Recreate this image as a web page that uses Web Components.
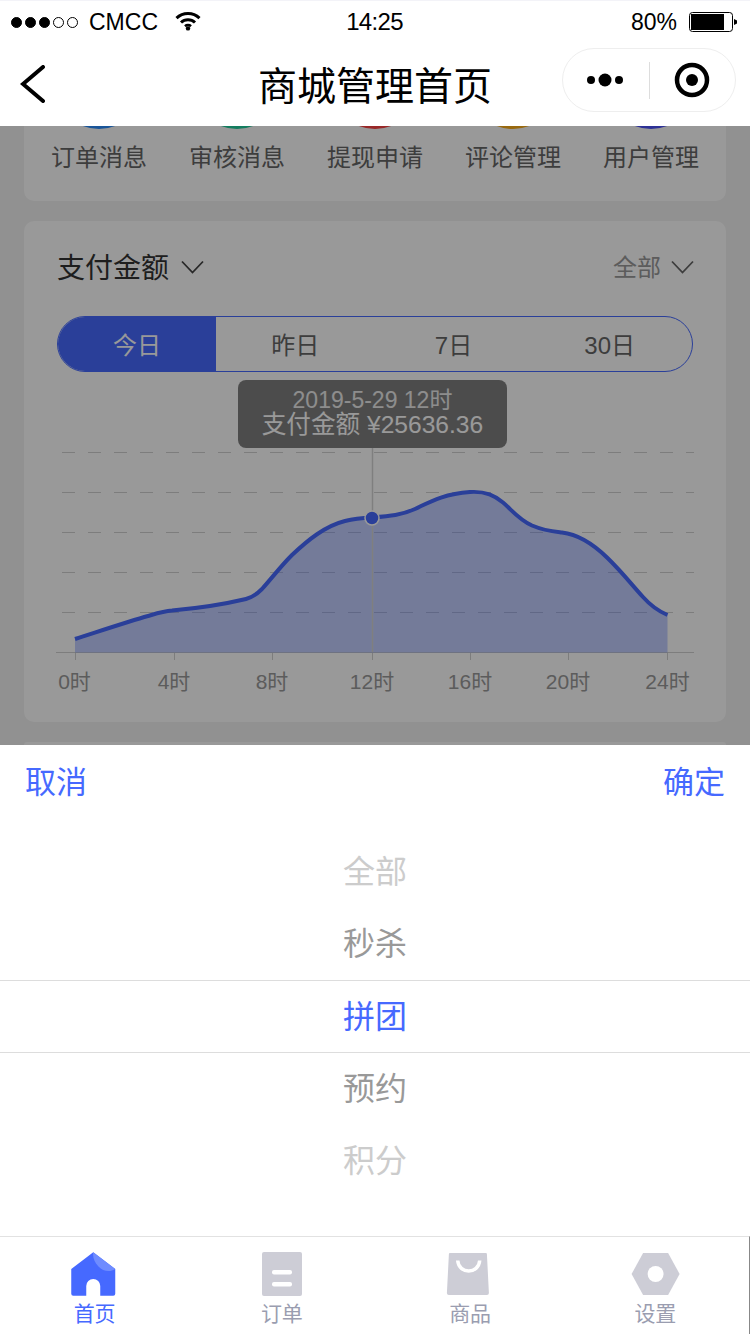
<!DOCTYPE html>
<html lang="zh">
<head>
<meta charset="utf-8">
<title>商城管理首页</title>
<style>
  html, body { margin: 0; padding: 0; }
  body {
    width: 750px;
    height: 1334px;
    overflow: hidden;
    background: #fff;
    font-family: "Liberation Sans", "Noto Sans CJK SC", sans-serif;
  }
  admin-page { height: 1334px; }
</style>
</head>
<body>
<admin-page>
  <status-bar slot="top"></status-bar>
  <nav-bar slot="top">商城管理首页</nav-bar>

  <shortcut-panel slot="behind">
    <shortcut-item color="#2a8eff">订单消息</shortcut-item>
    <shortcut-item color="#21d09e">审核消息</shortcut-item>
    <shortcut-item color="#ff4343">提现申请</shortcut-item>
    <shortcut-item color="#ffaf19">评论管理</shortcut-item>
    <shortcut-item color="#4b53fa">用户管理</shortcut-item>
  </shortcut-panel>
  <pay-card slot="behind"></pay-card>
  <next-card slot="behind"></next-card>

  <wheel-picker slot="bottom"></wheel-picker>
  <tab-bar slot="bottom"></tab-bar>
</admin-page>

<script>
class AdminPage extends HTMLElement {
  constructor() {
    super();
    this.attachShadow({ mode: "open" });
    this.shadowRoot.innerHTML = `
      <style>
        :host { display: flex; flex-direction: column; width: 750px; }
        .view {
          position: relative;
          flex: 1;
          min-height: 0;
          overflow: hidden;
          background: #f2f2f2;
          display: flex;
          flex-direction: column;
          justify-content: flex-end;
          align-items: center;
          gap: 20px;
        }
        .mask { position: absolute; inset: 0; background: rgba(0, 0, 0, 0.4); }
      </style>
      <slot name="top"></slot>
      <div class="view">
        <slot name="behind"></slot>
        <div class="mask"></div>
      </div>
      <slot name="bottom"></slot>
    `;
  }
}

class StatusBar extends HTMLElement {
  constructor() {
    super();
    this.attachShadow({ mode: "open" });
    this.shadowRoot.innerHTML = `
      <style>
        :host {
          display: grid;
          grid-template-columns: 1fr auto 1fr;
          align-items: center;
          height: 40px;
          padding: 3px 12px 0 11px;
          box-sizing: border-box;
          background: #fff;
          border-top: 1px solid #f3f3f8;
          color: #000;
          font-size: 23px;
        }
        .left { display: flex; align-items: center; }
        .dots { display: flex; gap: 3px; margin-right: 11px; }
        .dots i { width: 11px; height: 11px; border-radius: 50%; border: 1px solid #000; box-sizing: border-box; }
        .dots i.on { background: #000; }
        .wifi { margin-left: 17px; margin-top: -2px; }
        .right { display: flex; align-items: center; justify-content: flex-end; gap: 12px; }
        .time { font-size: 24px; letter-spacing: -0.7px; }
        svg { display: block; }
      </style>
      <div class="left">
        <div class="dots"><i class="on"></i><i class="on"></i><i class="on"></i><i></i><i></i></div>
        <span>CMCC</span>
        <svg class="wifi" width="26" height="20" viewBox="0 0 26 20">
          <path d="M1.500 7.200a16.500 16.500 0 0 1 23 0" fill="none" stroke="#000" stroke-width="3"/>
          <path d="M6 11.500a10 10 0 0 1 14 0" fill="none" stroke="#000" stroke-width="3"/>
          <path d="M10 15.200a4.500 4.500 0 0 1 6 0" fill="none" stroke="#000" stroke-width="2.600"/>
          <circle cx="13" cy="17.400" r="2.200"/>
        </svg>
      </div>
      <span class="time">14:25</span>
      <div class="right">
        <span>80%</span>
        <svg width="49" height="20" viewBox="0 0 49 20">
          <rect x="0.500" y="0.500" width="43" height="19" rx="3" fill="none" stroke="#000"/>
          <rect x="2" y="2" width="33" height="16" fill="#000"/>
          <path d="M45 7l3 1.500v3l-3 1.500z" fill="#000"/>
        </svg>
      </div>
    `;
  }
}

class NavBar extends HTMLElement {
  constructor() {
    super();
    this.attachShadow({ mode: "open" });
    this.shadowRoot.innerHTML = `
      <style>
        :host {
          display: grid;
          grid-template-columns: 1fr auto 1fr;
          align-items: center;
          height: 86px;
          background: #fff;
          color: #000;
        }
        .back { display: block; margin: 2px 0 0 20px; }
        .title { font-size: 39px; line-height: 50px; margin-top: 7px; }
        .capsule {
          justify-self: end;
          display: flex;
          align-items: center;
          width: 174px;
          height: 64px;
          margin: -6px 14px 0 0;
          box-sizing: border-box;
          border: 1px solid #eee;
          border-radius: 32px;
        }
        .capsule svg { display: block; }
        .line { width: 1px; height: 37px; background: #ddd; }
        .cell { flex: 1; display: flex; justify-content: center; }
      </style>
      <svg class="back" width="26" height="38" viewBox="0 0 26 38">
        <path d="M23 2L3 19l20 17" fill="none" stroke="#000" stroke-width="4" stroke-linecap="round" stroke-linejoin="miter"/>
      </svg>
      <div class="title"><slot></slot></div>
      <div class="capsule">
        <div class="cell">
          <svg width="40" height="14" viewBox="0 0 40 14">
            <circle cx="5" cy="7" r="4"/><circle cx="19" cy="7" r="6.500"/><circle cx="33" cy="7" r="4"/>
          </svg>
        </div>
        <div class="line"></div>
        <div class="cell">
          <svg width="36" height="36" viewBox="0 0 36 36">
            <circle cx="18" cy="18" r="15" fill="none" stroke="#000" stroke-width="4.500"/>
            <circle cx="18" cy="18" r="6"/>
          </svg>
        </div>
      </div>
    `;
  }
}

class ShortcutPanel extends HTMLElement {
  constructor() {
    super();
    this.attachShadow({ mode: "open" });
    this.shadowRoot.innerHTML = `
      <style>
        :host {
          display: grid;
          flex: none;
          grid-template-columns: repeat(5, 138px);
          justify-content: center;
          width: 702px;
          padding-bottom: 25px;
          background: #fff;
          border-radius: 10px;
        }
      </style>
      <slot></slot>
    `;
  }
}

class ShortcutItem extends HTMLElement {
  constructor() {
    super();
    this.attachShadow({ mode: "open" });
    this.shadowRoot.innerHTML = `
      <style>
        :host {
          display: flex;
          flex-direction: column;
          align-items: center;
          gap: 11px;
          font-size: 24px;
          line-height: 36px;
          color: #666;
        }
        .dot { width: 90px; height: 90px; border-radius: 50%; }
      </style>
      <div class="dot"></div>
      <div><slot></slot></div>
    `;
  }
  connectedCallback() {
    this.shadowRoot.querySelector(".dot").style.background = this.getAttribute("color");
  }
}

class PayCard extends HTMLElement {
  constructor() {
    super();
    this.attachShadow({ mode: "open" });
    this.shadowRoot.innerHTML = `
      <style>
        :host {
          display: block;
          flex: none;
          width: 702px;
          height: 501px;
          box-sizing: border-box;
          background: #fff;
          border-radius: 10px;
        }
        .head {
          display: flex;
          justify-content: space-between;
          align-items: center;
          height: 92px;
          padding: 0 32px 0 33px;
        }
        .pick { display: flex; align-items: center; gap: 12px; }
        .pick + .pick { gap: 10px; }
        .name { font-size: 28px; color: #333; padding-bottom: 2px; }
        .scope { font-size: 24px; color: #999; padding-bottom: 4px; }
        .arrow { display: block; }
      </style>
      <div class="head">
        <div class="pick">
          <span class="name">支付金额</span>
          <svg class="arrow" width="23" height="14" viewBox="0 0 23 14"><path d="M1 1.500l10.500 11L22 1.500" fill="none" stroke="#444" stroke-width="1.800"/></svg>
        </div>
        <div class="pick">
          <span class="scope">全部</span>
          <svg class="arrow" width="23" height="14" viewBox="0 0 23 14"><path d="M1 1.500l10.500 11L22 1.500" fill="none" stroke="#666" stroke-width="1.800"/></svg>
        </div>
      </div>
      <range-tabs></range-tabs>
      <pay-chart></pay-chart>
    `;
  }
}

class RangeTabs extends HTMLElement {
  constructor() {
    super();
    this.attachShadow({ mode: "open" });
    this.shadowRoot.innerHTML = `
      <style>
        :host {
          display: grid;
          grid-template-columns: 158px repeat(3, 1fr);
          width: 636px;
          height: 56px;
          margin: 3px 0 0 33px;
          box-sizing: border-box;
          border: 1px solid #4669ff;
          border-radius: 28px;
          overflow: hidden;
          font-size: 24px;
          color: #666;
        }
        div { display: flex; align-items: center; justify-content: center; padding-bottom: 2px; }
        .on { background: #4669ff; color: #fff; }
        .seven { padding-right: 1px; }
        .month { padding-right: 6px; }
      </style>
      <div class="on">今日</div><div>昨日</div><div class="seven">7日</div><div class="month">30日</div>
    `;
  }
}

class PayChart extends HTMLElement {
  constructor() {
    super();
    this.attachShadow({ mode: "open" });
    const curve = "M75 639C100 631 130 621 148 616C158 613 164 611 172 610.5C195 608.5 225 604 246 599" +
      "C252 597.5 256 595 262 589C272 578 280 567 292 555C308 540 325 526 345 521C355 518.5 362 518 372 517.5" +
      "C390 516 402 515 415 509C428 503 442 494 470 492C486 491 495 496 503 502.5C512 510 518 519 532 525.5" +
      "C545 531 553 531.5 562 532.5C575 534 590 541 607 557.5C622 572 632 585 643 597C651 606 658 611 667.5 615";
    const grid = [452, 492, 532, 572, 612]
      .map((y) => `<line x1="62" x2="694" y1="${y}.5" y2="${y}.5" stroke="#d0d0d0" stroke-dasharray="13 13"/>`)
      .join("");
    const hours = [[75.5, "0时"], [174.5, "4时"], [272.5, "8时"], [372.5, "12时"], [470.5, "16时"], [568.5, "20时"], [667.5, "24时"]];
    const ticks = hours
      .map((h) => `<line x1="${h[0]}" x2="${h[0]}" y1="652" y2="660" stroke="#d0d0d0"/>`)
      .join("");
    const labels = hours
      .map((h, i) => `<text x="${i === 0 ? 74.5 : h[0] - (i === 6 ? 0 : 0.5)}" y="688.5">${h[1]}</text>`)
      .join("");
    this.shadowRoot.innerHTML = `
      <style>
        :host { display: block; position: relative; height: 350px; }
        svg { display: block; }
        text { font-size: 21px; fill: #999; text-anchor: middle; }
        .tip {
          position: absolute;
          left: 214px;
          top: 8px;
          width: 269px;
          height: 68px;
          box-sizing: border-box;
          padding-top: 8px;
          background: rgba(0, 0, 0, 0.5);
          border-radius: 8px;
          color: #fff;
          text-align: center;
          font-size: 24.600px;
          line-height: 26px;
        }
        .tip div:first-child { font-size: 23px; line-height: 24px; opacity: 0.85; }
      </style>
      <svg width="702" height="350" viewBox="24 372 702 350">
        ${grid}
        <line x1="56" x2="694" y1="652.5" y2="652.5" stroke="#d0d0d0"/>
        ${ticks}
        <path d="${curve}L667.500 652.500L75 652.500Z" fill="#4669ff" fill-opacity="0.33"/>
        <line x1="372.5" x2="372.5" y1="448" y2="652" stroke="#d4d4d4" stroke-width="1.500"/>
        <path d="${curve}" fill="none" stroke="#4669ff" stroke-width="4"/>
        <circle cx="372" cy="518" r="7" fill="#4669ff" stroke="#fff" stroke-width="1.500"/>
        ${labels}
      </svg>
      <div class="tip">
        <div>2019-5-29 12时</div>
        <div>支付金额 ¥25636.36</div>
      </div>
    `;
  }
}

class NextCard extends HTMLElement {
  constructor() {
    super();
    this.attachShadow({ mode: "open" });
    this.shadowRoot.innerHTML = `
      <style>
        :host {
          display: block;
          flex: none;
          width: 702px;
          height: 3px;
          background: #fff;
          border-radius: 10px 10px 0 0;
        }
      </style>
    `;
  }
}

class WheelPicker extends HTMLElement {
  constructor() {
    super();
    this.attachShadow({ mode: "open" });
    this.shadowRoot.innerHTML = `
      <style>
        :host {
          display: block;
          height: 491px;
          box-sizing: border-box;
          background: #fff;
        }
        .actions {
          display: flex;
          justify-content: space-between;
          align-items: center;
          height: 74px;
          box-sizing: border-box;
          padding: 0 25px 6px;
          color: #4669ff;
          font-size: 31px;
        }
        .wheel { margin-top: 17px; }
        .row {
          display: flex;
          align-items: center;
          justify-content: center;
          height: 72px;
          box-sizing: border-box;
          padding-bottom: 6px;
          font-size: 32px;
        }
        .far { color: #ccc; }
        .near { color: #999; }
        .now {
          color: #4669ff;
          border-top: 1px solid #ddd;
          border-bottom: 1px solid #ddd;
          height: 73px;
        }
      </style>
      <div class="actions"><span>取消</span><span>确定</span></div>
      <div class="wheel">
        <div class="row far">全部</div>
        <div class="row near">秒杀</div>
        <div class="row now">拼团</div>
        <div class="row near">预约</div>
        <div class="row far">积分</div>
      </div>
    `;
  }
}

const TAB_ICONS = {
  home: `<svg width="46" height="46" viewBox="0 0 46 46">
      <path d="M22.250 0.300L44.250 17V41.700a2 2 0 0 1-2 2H29.250V34a7 7 0 0 0-14 0V43.700H2.250a2 2 0 0 1-2-2V17z" fill="#4669ff"/>
      <path d="M22.250 0.300L44.250 17C39 20.500 32 19.500 27.500 14.500C23.500 10 21.500 5.500 22.250 0.300z" fill="#6f8cff"/>
    </svg>`,
  order: `<svg width="46" height="46" viewBox="0 0 46 46">
      <rect x="4" y="0" width="40" height="44" rx="2" fill="#cdcdd6"/>
      <rect x="14" y="18" width="20" height="4.500" rx="2" fill="#fff"/>
      <rect x="14" y="30" width="20" height="4.500" rx="2" fill="#fff"/>
    </svg>`,
  goods: `<svg width="46" height="46" viewBox="0 0 46 46">
      <path d="M3.900 2a1 1 0 0 1 1-1h36a1 1 0 0 1 1 1l2 39a2 2 0 0 1-2 2H3.900a2 2 0 0 1-2-2z" fill="#cdcdd6"/>
      <path d="M12.700 8.500c1 14 21 14 22 0" fill="none" stroke="#fff" stroke-width="3.500"/>
    </svg>`,
  setting: `<svg width="50" height="46" viewBox="0 0 50 46">
      <path d="M13.100 1h25L49.600 22L38.100 43h-25L1.600 22z" fill="#cdcdd6"/>
      <circle cx="25.600" cy="22" r="8" fill="#fff"/>
    </svg>`,
};

class TabBar extends HTMLElement {
  constructor() {
    super();
    this.attachShadow({ mode: "open" });
    this.shadowRoot.innerHTML = `
      <style>
        :host {
          display: grid;
          grid-template-columns: repeat(4, 1fr);
          height: 98px;
          box-sizing: border-box;
          padding-top: 15px;
          background: #fff;
          border-top: 1px solid #e2e2e2;
          border-right: 1px solid #888;
        }
        .tab {
          display: flex;
          flex-direction: column;
          align-items: center;
          color: #9a9db0;
          font-size: 21px;
          line-height: 26px;
        }
        .tab svg { display: block; margin-bottom: 3px; }
        .tab:nth-child(2) span, .tab:nth-child(3) span { padding-left: 2px; }
        .tab:nth-child(4) span { padding-left: 4px; }
        .on { color: #4669ff; }
      </style>
      <div class="tab on">${TAB_ICONS.home}<span>首页</span></div>
      <div class="tab">${TAB_ICONS.order}<span>订单</span></div>
      <div class="tab">${TAB_ICONS.goods}<span>商品</span></div>
      <div class="tab">${TAB_ICONS.setting}<span>设置</span></div>
    `;
  }
}

customElements.define("admin-page", AdminPage);
customElements.define("status-bar", StatusBar);
customElements.define("nav-bar", NavBar);
customElements.define("shortcut-panel", ShortcutPanel);
customElements.define("shortcut-item", ShortcutItem);
customElements.define("pay-card", PayCard);
customElements.define("range-tabs", RangeTabs);
customElements.define("pay-chart", PayChart);
customElements.define("next-card", NextCard);
customElements.define("wheel-picker", WheelPicker);
customElements.define("tab-bar", TabBar);
</script>
</body>
</html>
